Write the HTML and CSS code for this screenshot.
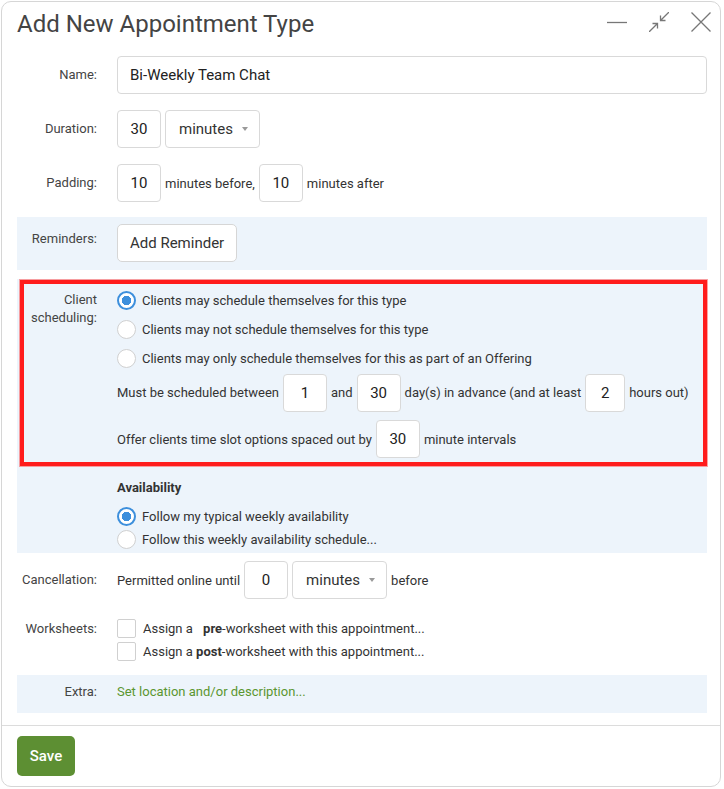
FILE: index.html
```html
<!DOCTYPE html>
<html lang="en">
<head>
<meta charset="utf-8">
<title>Add New Appointment Type</title>
<link rel="stylesheet" href="styles.css">
</head>
<body>
<div class="dialog">
  <div class="header">
    <h1 class="title">Add New Appointment Type</h1>
    <div class="win-controls">
      <svg class="win-icon" viewBox="0 0 20 20" aria-hidden="true"><path d="M0 10.5H20"/></svg>
      <svg class="win-icon" viewBox="0 0 20 20" aria-hidden="true"><path d="M20 0L11.5 8.5M11.5 3.5V8.5H16.5M0 20L8.5 11.5M8.5 16.5V11.5H3.5"/></svg>
      <svg class="win-icon" viewBox="0 0 20 20" aria-hidden="true"><path d="M0.5 0.5L19.5 19.5M19.5 0.5L0.5 19.5"/></svg>
    </div>
  </div>

  <div class="form">
    <div class="row">
      <div class="label">Name:</div>
      <div class="field"><input class="input input-wide" type="text" value="Bi-Weekly Team Chat"></div>
    </div>

    <div class="row">
      <div class="label">Duration:</div>
      <div class="field inline">
        <input class="input input-num" type="text" value="30">
        <div class="select">minutes<span class="caret"></span></div>
      </div>
    </div>

    <div class="row">
      <div class="label">Padding:</div>
      <div class="field inline">
        <input class="input input-num" type="text" value="10">
        <span>minutes before,</span>
        <input class="input input-num" type="text" value="10">
        <span>minutes after</span>
      </div>
    </div>

    <div class="row row-blue row-reminders">
      <div class="label label-top">Reminders:</div>
      <div class="field"><button class="btn" type="button">Add Reminder</button></div>
    </div>

    <div class="row row-blue row-sched">
      <div class="highlight"></div>
      <div class="label label-sched">Client scheduling:</div>
      <div class="field">
        <div class="radio-list">
          <label class="radio-item"><span class="radio checked"></span><span>Clients may schedule themselves for this type</span></label>
          <label class="radio-item"><span class="radio"></span><span>Clients may not schedule themselves for this type</span></label>
          <label class="radio-item"><span class="radio"></span><span>Clients may only schedule themselves for this as part of an Offering</span></label>
        </div>
        <div class="inline inline-sched">
          <span>Must be scheduled between</span>
          <input class="input input-num" type="text" value="1">
          <span>and</span>
          <input class="input input-num" type="text" value="30">
          <span>day(s) in advance (and at least</span>
          <input class="input input-num input-sm" type="text" value="2">
          <span>hours out)</span>
        </div>
        <div class="inline inline-offer">
          <span>Offer clients time slot options spaced out by</span>
          <input class="input input-num" type="text" value="30">
          <span>minute intervals</span>
        </div>
        <div class="subhead">Availability</div>
        <div class="radio-list radio-list-tight">
          <label class="radio-item"><span class="radio checked"></span><span>Follow my typical weekly availability</span></label>
          <label class="radio-item"><span class="radio"></span><span>Follow this weekly availability schedule...</span></label>
        </div>
      </div>
    </div>

    <div class="row">
      <div class="label">Cancellation:</div>
      <div class="field inline">
        <span>Permitted online until</span>
        <input class="input input-num" type="text" value="0">
        <div class="select">minutes<span class="caret"></span></div>
        <span>before</span>
      </div>
    </div>

    <div class="row row-worksheets">
      <div class="label label-ws">Worksheets:</div>
      <div class="field">
        <label class="check-item"><span class="checkbox"></span><span>Assign a <b class="pre">pre</b>-worksheet with this appointment...</span></label>
        <label class="check-item"><span class="checkbox"></span><span>Assign a <b>post</b>-worksheet with this appointment...</span></label>
      </div>
    </div>

    <div class="row row-blue row-extra">
      <div class="label">Extra:</div>
      <div class="field"><a class="link" href="#">Set location and/or description...</a></div>
    </div>
  </div>

  <div class="footer">
    <button class="btn-save" type="button">Save</button>
  </div>
</div>
</body>
</html>
```

FILE: styles.css
```css
html, body {
  margin: 0;
  padding: 0;
  background: #fff;
}

body {
  font-family: Roboto, "Liberation Sans", Arial, sans-serif;
  color: #333;
  font-size: 13px;
}

.dialog {
  margin: 1px 0 0 1px;
  width: 720px;
  box-sizing: border-box;
  border: 1px solid #d6d6d6;
  border-radius: 10px;
  background: #fff;
}

/* header */
.header {
  display: flex;
  justify-content: space-between;
  align-items: flex-start;
  height: 46px;
  padding: 0 9px 0 15px;
}

.title {
  margin: 0;
  padding-top: 8px;
  font-size: 24px;
  line-height: 28px;
  font-weight: 400;
  color: #444;
}

.win-controls {
  display: flex;
  gap: 22px;
  padding-top: 10px;
}

.win-icon {
  width: 20px;
  height: 20px;
  fill: none;
  stroke: #777;
  stroke-width: 1.3;
}

/* form */
.form {
  padding: 0 13px 12px 15px;
}

.row {
  position: relative;
  display: grid;
  grid-template-columns: 80px 1fr;
  column-gap: 20px;
  align-items: center;
  padding: 8px 0;
}

.row-blue {
  background: #edf4fb;
}

.label {
  text-align: right;
  font-size: 13px;
  line-height: 17.5px;
  color: #444;
}

.field {
  min-width: 0;
}

.inline {
  display: flex;
  align-items: center;
  gap: 4px;
  font-size: 13px;
  color: #333;
  white-space: nowrap;
}

.input {
  box-sizing: border-box;
  height: 38px;
  border: 1px solid #d9d9d9;
  border-radius: 4px;
  background: #fff;
  font-family: Roboto, "Liberation Sans", Arial, sans-serif;
  font-size: 15px;
  color: #222;
  padding: 0 12px;
  outline: none;
  margin: 0;
}

.input-wide {
  width: 100%;
}

.input-num {
  width: 44px;
  padding: 0;
  text-align: center;
}

.input-sm {
  width: 40px;
}

.select {
  box-sizing: border-box;
  width: 95px;
  height: 38px;
  display: flex;
  align-items: center;
  justify-content: space-between;
  padding: 0 11px 0 13px;
  border: 1px solid #d9d9d9;
  border-radius: 4px;
  background: #fff;
  font-size: 15px;
  color: #333;
}

.caret {
  width: 0;
  height: 0;
  border-left: 3.5px solid transparent;
  border-right: 3.5px solid transparent;
  border-top: 4px solid #9a9a9a;
}

.btn {
  box-sizing: border-box;
  height: 38px;
  padding: 0 12px;
  border: 1px solid #d6d6d6;
  border-radius: 5px;
  background: #fff;
  font-family: Roboto, "Liberation Sans", Arial, sans-serif;
  font-size: 15px;
  color: #333;
}

/* reminders */
.row-reminders {
  margin-top: 7px;
  padding: 7px 0 8px;
  align-items: start;
}

.label-top {
  padding-top: 6px;
}

/* client scheduling */
.row-sched {
  margin-top: 9px;
  padding: 7px 0 2px;
  align-items: start;
}

.label-sched {
  padding-top: 5px;
}

.highlight {
  position: absolute;
  top: 1px;
  left: 3px;
  right: 0;
  height: 186px;
  box-sizing: border-box;
  border: 4px solid #ff1c1c;
  box-shadow: 0 0 0 1px rgba(255, 70, 70, 0.5);
  pointer-events: none;
}

.radio-list {
  display: flex;
  flex-direction: column;
}

.radio-item {
  display: flex;
  align-items: center;
  gap: 6px;
  height: 29px;
  font-size: 13px;
  color: #333;
  white-space: nowrap;
}

.radio-list-tight .radio-item {
  height: 23px;
}

.radio {
  box-sizing: border-box;
  flex: none;
  width: 19px;
  height: 19px;
  border-radius: 50%;
  border: 1px solid #d0d0d0;
  background: #fff;
}

.radio.checked {
  border: 2px solid #3d8fdc;
  background: radial-gradient(circle, #3d8fdc 0 4.5px, #fff 5px);
}

.inline-sched {
  height: 39px;
}

.inline-offer {
  margin-top: 8px;
}

.subhead {
  margin-top: 21px;
  font-size: 13px;
  line-height: 18px;
  font-weight: 700;
  color: #333;
}

.radio-list-tight {
  margin-top: 8px;
}

/* worksheets */
.row-worksheets {
  padding: 10px 0 12px;
  align-items: start;
}

.label-ws {
  line-height: 23px;
}

.check-item {
  display: flex;
  align-items: center;
  gap: 6px;
  height: 23px;
  font-size: 13px;
  color: #333;
  white-space: nowrap;
}

.check-item b {
  font-weight: 700;
  color: #333;
}

.check-item b.pre {
  margin-left: 7px;
}

.checkbox {
  box-sizing: border-box;
  flex: none;
  width: 19px;
  height: 19px;
  border: 1px solid #d0d0d0;
  border-radius: 2px;
  background: #fff;
  margin-right: 1px;
}

/* extra */
.row-extra {
  padding: 8px 0 12px;
}

.row-extra .label,
.row-extra .field {
  line-height: 18px;
}

.link {
  font-size: 13px;
  color: #5b9630;
  text-decoration: none;
}

/* footer */
.footer {
  border-top: 1px solid #dcdcdc;
  padding: 10px 15px;
}

.btn-save {
  display: block;
  width: 58px;
  height: 40px;
  border: none;
  border-radius: 5px;
  background: #5d8f33;
  color: #fff;
  font-family: Roboto, "Liberation Sans", Arial, sans-serif;
  font-size: 15px;
  font-weight: 500;
  padding: 0;
}
```
